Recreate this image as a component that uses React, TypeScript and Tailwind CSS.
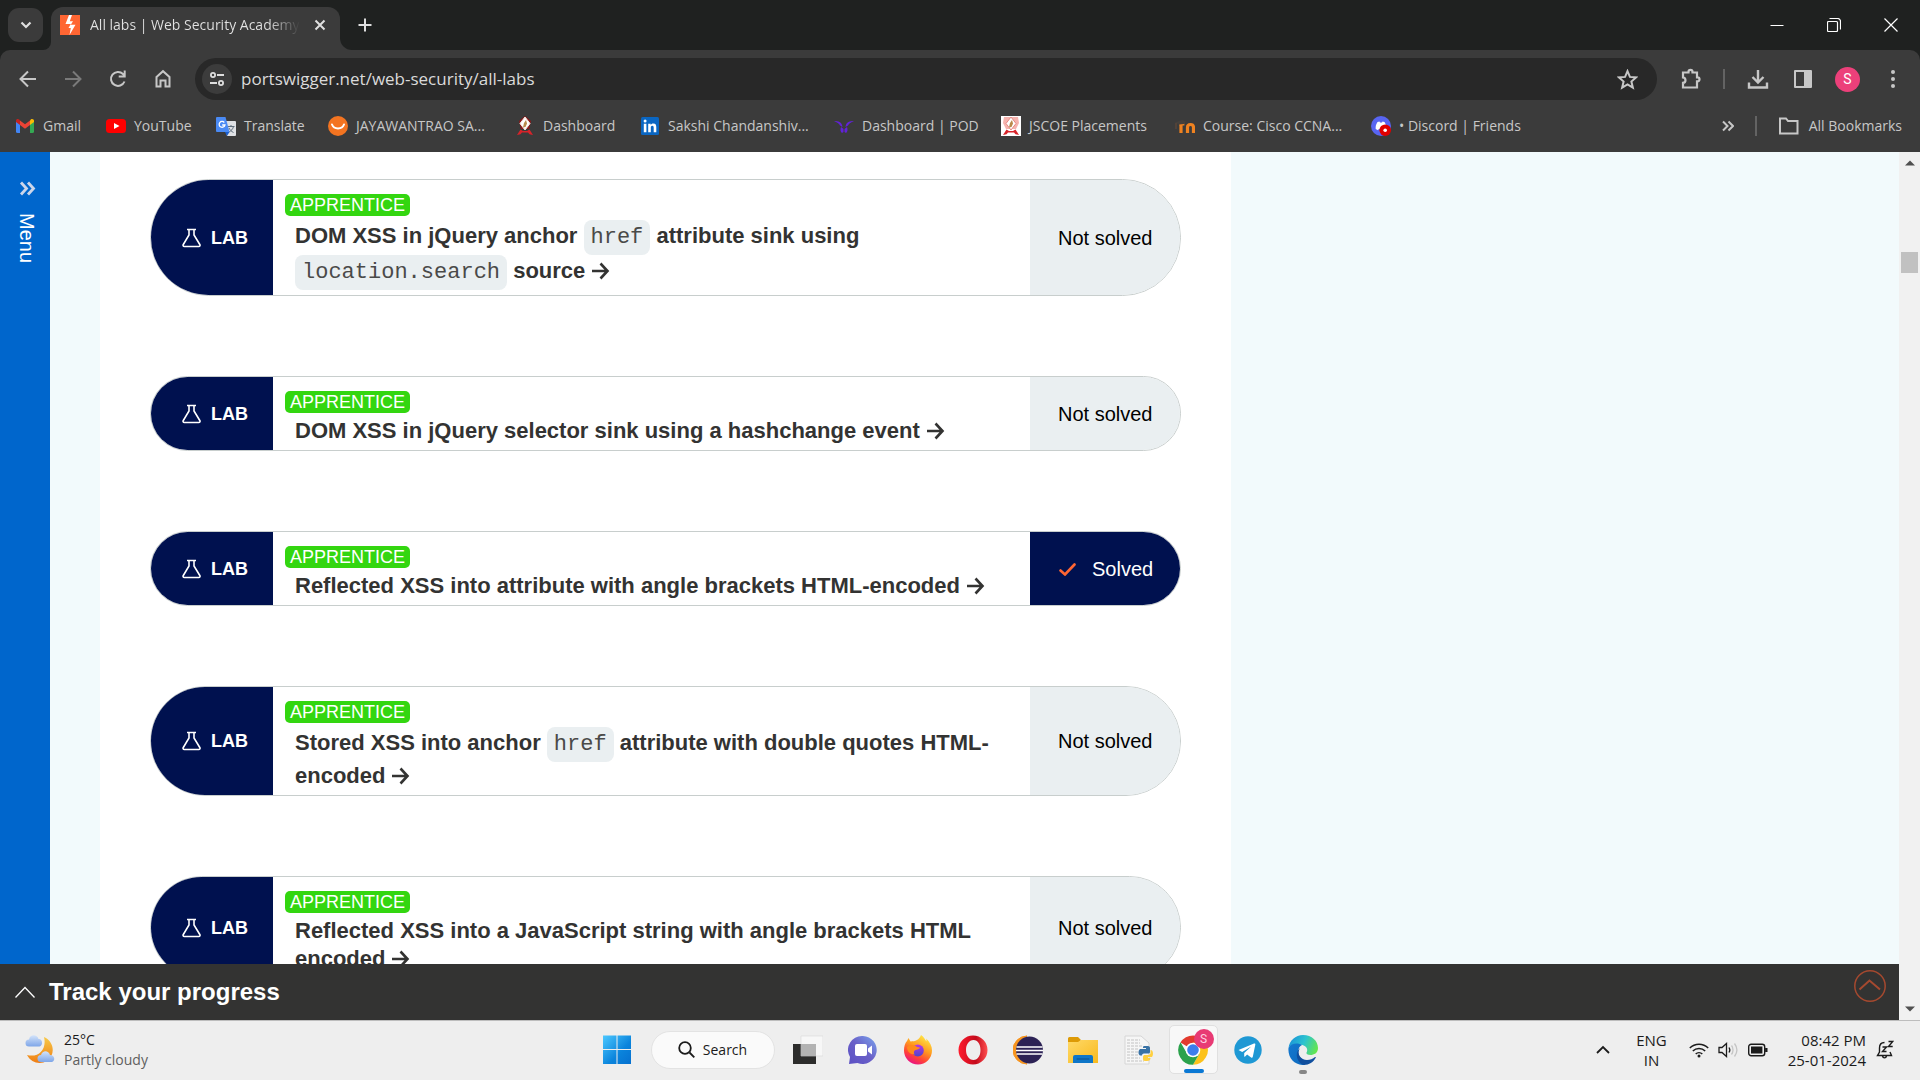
import React from "react";

type P = { children?: React.ReactNode };

const ui = "font-['Open_Sans','Noto_Sans',sans-serif]";

/* ---------- small drawings ---------- */

function Stroke({ d, size = 20, w = 2, vb = "0 0 20 20", cls = "" }: { d: string; size?: number; w?: number; vb?: string; cls?: string }) {
  return (
    <svg width={size} height={size} viewBox={vb} fill="none" stroke="currentColor" strokeWidth={w} className={"shrink-0 " + cls} aria-hidden="true">
      <path d={d} />
    </svg>
  );
}

function BurpIcon() {
  return (
    <svg width="20" height="20" viewBox="0 0 20 20" className="shrink-0" aria-hidden="true">
      <rect width="20" height="20" fill="#ff6633" />
      <path d="M9 0 5.500 9h5.300L8.500 13h2.300L9.500 20l6-10.200h-4.700L13 6.200H9.800L12 0Z" fill="#fff" />
    </svg>
  );
}

function GmailIcon() {
  return (
    <svg width="20" height="20" viewBox="0 0 20 20" className="shrink-0" aria-hidden="true">
      <path d="M1 5v10.500A1.500 1.500 0 0 0 2.500 17H5V8Z" fill="#4285f4" />
      <path d="M15 8v9h2.500a1.500 1.500 0 0 0 1.500-1.500V5Z" fill="#34a853" />
      <path d="M15 4.500V9l4-3V4.800c0-1.700-1.900-2.500-3.200-1.400Z" fill="#fbbc04" />
      <path d="M5 9V4.500l5 3.800 5-3.800V9l-5 3.800Z" fill="#ea4335" />
      <path d="M1 4.800V6l4 3V4.500l-.8-.9C2.900 2.500 1 3.200 1 4.800Z" fill="#c5221f" />
    </svg>
  );
}

function YoutubeIcon() {
  return (
    <svg width="20" height="20" viewBox="0 0 20 20" className="shrink-0" aria-hidden="true">
      <rect y="3" width="20" height="14" rx="3.500" fill="#f00" />
      <path d="m8 7 5.500 3L8 13Z" fill="#fff" />
    </svg>
  );
}

function TranslateIcon() {
  return (
    <svg width="20" height="20" viewBox="0 0 20 20" className="shrink-0" aria-hidden="true">
      <path d="M8 5h11a1 1 0 0 1 1 1v13a1 1 0 0 1-1 1h-8Z" fill="#dfe1e5" />
      <path d="M11.500 10.500h7M15 9v1.500M17.500 10.500c-.5 2.500-2.500 4.500-4.500 5.500M13 12c1 2 2.500 3.500 4.500 4.500" stroke="#5f6e7c" fill="none" />
      <path d="M1 1h8.500l4 15H1a1 1 0 0 1-1-1V2a1 1 0 0 1 1-1Z" fill="#4a8af4" />
      <path d="m9 16 2 4 2.500-4Z" fill="#1a5fd0" />
      <path d="M8.300 6.500A2.900 2.900 0 1 0 8.900 9H6.200" stroke="#fff" strokeWidth="1.300" fill="none" />
    </svg>
  );
}

function SmileIcon() {
  return (
    <svg width="20" height="20" viewBox="0 0 20 20" className="shrink-0" aria-hidden="true">
      <circle cx="10" cy="10" r="10" fill="#f37421" />
      <path d="M4 8.500c2 5.200 10 5.200 12 0" stroke="#fff" strokeWidth="2" fill="none" strokeLinecap="round" />
    </svg>
  );
}

function CrestIcon({ boxed }: { boxed?: boolean }) {
  return (
    <svg width="20" height="20" viewBox="0 0 20 20" className="shrink-0" aria-hidden="true">
      {boxed && <rect width="20" height="20" fill="#fff" />}
      {boxed && <path d="M3 1h14l1 6-3 6H5L2 7Z" fill="#f6b3ae" />}
      {!boxed && <path d="M10 0 16 5l-2 8H6L4 5Z" fill="#8c1717" />}
      <path d="M10 1 15 7.500 10 14 5 7.500Z" fill="#fff" stroke={boxed ? "#e58a84" : "#f3e6e0"} />
      <path d="M11 4 12 7.500 10.500 11 8 11.500 9 7Z" fill="#b98a4b" />
      <path d="M2 19 5.500 13.500 8 15h4l2.500-1.500L18 19l-3.500-.8-1.500-1.700H7l-1.500 1.700Z" fill="#d8232a" />
    </svg>
  );
}

function LinkedinIcon() {
  return (
    <svg width="20" height="20" viewBox="0 0 20 20" className="shrink-0" aria-hidden="true">
      <rect x="1" y="1" width="18" height="18" rx="1.500" fill="#0a66c2" />
      <path d="M3.800 7.800h2.600v8.400H3.800ZM5.100 3.600a1.500 1.500 0 1 1 0 3 1.500 1.500 0 0 1 0-3ZM8.200 7.800h2.500V9c.4-.7 1.300-1.400 2.600-1.400 2.500 0 3 1.600 3 3.800v4.800h-2.600V12c0-1.100-.1-2.200-1.400-2.200s-1.500 1-1.500 2.100v4.300H8.200Z" fill="#fff" />
    </svg>
  );
}

function PodIcon() {
  return (
    <svg width="20" height="20" viewBox="0 0 20 20" className="shrink-0" aria-hidden="true">
      <path d="M0 5c4 0 8 .5 8.500 6L6 9.500C5 7 3 6.500 0 5ZM20 5c-4 0-8 .5-8.500 6L14 9.500c1-2.500 3-3 6-4.500ZM7 11l2.500 2v3L8 17c-1.500-1-2-3-1-6ZM13 11l-2.500 2v3l1.500 1c1.500-1 2-3 1-6Z" fill="#6222d8" />
    </svg>
  );
}

function MoodleIcon() {
  return (
    <svg width="20" height="20" viewBox="0 0 20 20" className="shrink-0" aria-hidden="true">
      <path d="M6 17V8.500M12.500 17v-5.500c0-4 6-4 6 0V17" stroke="#ef8220" strokeWidth="3.200" fill="none" />
      <path d="M4.400 9.500h5v-2H4.400Z" fill="#ef8220" />
      <path d="M0 6.500 7 4l4 1.500L9 8 4 8.500Z" fill="#45403c" />
      <path d="M1 7v6" stroke="#6b4a36" />
    </svg>
  );
}

function DiscordIcon() {
  return (
    <svg width="20" height="20" viewBox="0 0 20 20" className="shrink-0" aria-hidden="true">
      <circle cx="10" cy="10" r="10" fill="#5865f2" />
      <path d="M6.500 6 8.500 5.400l.5 1h2l.5-1 2 .6c1.500 2.200 2 4.400 1.800 7l-2.300 1.200-.8-1.200H7.800L7 14.200 4.700 13C4.500 10.400 5 8.200 6.500 6Z" fill="#fff" />
      <circle cx="14.200" cy="14.200" r="5.800" fill="#e00000" />
      <circle cx="14.200" cy="14.200" r="1.800" fill="#fff" />
    </svg>
  );
}

function Flask() {
  return (
    <svg width="20" height="20" viewBox="0 0 20 20" fill="none" stroke="#fff" strokeWidth="1.600" className="shrink-0" aria-hidden="true">
      <path d="M5 1.500h9M7 1.500v5.500L1.300 16.500c-.6 1 0 2 1 2h14.500c1 0 1.600-1 1-2L12 7V1.500" />
    </svg>
  );
}

function Arrow() {
  return (
    <svg width="18" height="20" viewBox="0 0 18 20" fill="none" stroke="#333332" strokeWidth="2.600" className="ml-[7px] inline-block align-[-3px]" aria-hidden="true">
      <path d="M0 10h15.500M8.500 2.500 15.500 10l-7 7.500" />
    </svg>
  );
}

/* ---------- browser chrome ---------- */

function TabStrip() {
  return (
    <header className="flex h-[50px] shrink-0 items-end bg-[#1f2120] text-[#dfdfdf]">
      <button aria-label="Search tabs" className="mb-2 ml-2 flex h-[34px] w-[35px] items-center justify-center rounded-[11px] bg-[#3b3b3b]">
        <Stroke size={12} vb="0 0 12 12" d="m1.500 3.500 4.500 4.500 4.500-4.500" w={2.200} />
      </button>
      <div className="flex items-end">
        <div className="h-[10px] w-[8px] overflow-hidden bg-[#3b3b3b]">
          <div className="h-full w-full rounded-br-[10px] bg-[#1f2120]" />
        </div>
        <div className="flex h-[43px] w-[289px] items-center rounded-t-[12px] bg-[#3b3b3b] pb-[7px] pl-[9px] pr-[10px]">
          <BurpIcon />
          <span className="ml-[10px] w-[210px] overflow-hidden whitespace-nowrap bg-linear-to-r from-[#e3e3e3] from-85% to-[#3b3b3b] bg-clip-text text-sm leading-5 text-transparent">All labs | Web Security Academy</span>
          <button aria-label="Close tab" className="ml-auto flex h-5 w-5 items-center justify-center">
            <Stroke size={12} vb="0 0 12 12" d="m1.500 1.500 9 9m0-9-9 9" />
          </button>
        </div>
        <div className="h-[12px] w-[12px] overflow-hidden bg-[#3b3b3b]">
          <div className="h-full w-full rounded-bl-[12px] bg-[#1f2120]" />
        </div>
      </div>
      <button aria-label="New tab" className="mb-[15px] ml-[3px] flex h-5 w-5 items-center justify-center">
        <Stroke size={14} vb="0 0 14 14" d="M7 .5v13M.5 7h13" />
      </button>
      <div className="ml-auto flex h-full items-center text-white">
        <button aria-label="Minimise" className="flex h-full w-[58px] items-center justify-center">
          <Stroke size={14} vb="0 0 14 14" d="M.5 7.500h13" w={1} />
        </button>
        <button aria-label="Restore" className="flex h-full w-[56px] items-center justify-center">
          <Stroke size={14} vb="0 0 14 14" d="M2.500.5h8a3 3 0 0 1 3 3v8M1.500 3.500h8a1 1 0 0 1 1 1v8a1 1 0 0 1-1 1h-8a1 1 0 0 1-1-1v-8a1 1 0 0 1 1-1Z" w={1.200} />
        </button>
        <button aria-label="Close" className="flex h-full w-[58px] items-center justify-center">
          <Stroke size={14} vb="0 0 14 14" d="m.5.5 13 13m0-13-13 13" w={1.200} />
        </button>
      </div>
    </header>
  );
}

function ToolButton({ label, children, cls = "" }: P & { label: string; cls?: string }) {
  return (
    <button aria-label={label} className={"flex h-[42px] w-[45px] shrink-0 items-center justify-center " + cls}>
      {children}
    </button>
  );
}

function Toolbar() {
  return (
    <div className="bg-[#1f2120]">
      <div className="flex h-[58px] items-center rounded-t-[10px] bg-[#3b3b3b] pl-[5px] pr-[5px] text-[#c7c7c7]">
        <ToolButton label="Back"><Stroke d="M18 10H3M10 2.500 2.500 10l7.500 7.500" /></ToolButton>
        <ToolButton label="Forward" cls="text-[#7a7a7a]"><Stroke d="M2 10h15M10 2.500l7.500 7.500-7.500 7.500" /></ToolButton>
        <ToolButton label="Reload"><Stroke d="M16.500 12.500A7 7 0 1 1 15 5L16.500 6.800M16.700 1.500v6h-6" /></ToolButton>
        <ToolButton label="Home"><Stroke d="M3.500 8 10 2.200 16.500 8v9.500h-4v-6h-5v6h-4Z" /></ToolButton>
        <div className="ml-[10px] flex h-[42px] min-w-0 flex-1 items-center rounded-full bg-[#282828] pl-[7px] pr-[19px]">
          <button aria-label="View site information" className="flex h-[30px] w-[30px] shrink-0 items-center justify-center rounded-full bg-[#3c3c3c] text-[#dedede]">
            <svg width="18" height="18" viewBox="0 0 18 18" fill="none" stroke="currentColor" strokeWidth="1.800" aria-hidden="true">
              <circle cx="5" cy="5" r="2.100" /><path d="M9 5h7M2 13h7" /><circle cx="13" cy="13" r="2.100" />
            </svg>
          </button>
          <input id="address" aria-label="Address" readOnly defaultValue="portswigger.net/web-security/all-labs" className="ml-[9px] h-7 min-w-0 flex-1 bg-transparent text-[17px] leading-7 text-[#dadada] outline-none" />
          <button aria-label="Bookmark this tab" className="shrink-0">
            <Stroke d="m10 2 2.300 5.500 5.900.5-4.500 3.900 1.400 5.800L10 14.600l-5.100 3.100 1.400-5.800L1.800 8l5.900-.5Z" w={1.900} size={21} />
          </button>
        </div>
        <ToolButton label="Extensions" cls="ml-[11px]"><Stroke size={22} vb="0 0 22 22" d="M3 4.500h5.500v-.7a2 2 0 0 1 4 0v.7H17V9.300h.5a2 2 0 0 1 0 4H17V19.500H3v-4.700c3.300-.3 3.300-5 0-5.300Z" w={2.200} /></ToolButton>
        <span className="ml-[10px] mr-[10px] h-5 w-[2px] bg-[#636363]" />
        <ToolButton label="Downloads"><Stroke size={22} vb="0 0 22 22" d="M11 2v12M5.500 9l5.500 5.500L16.500 9M2 14.500v5h18v-5" w={2.400} /></ToolButton>
        <ToolButton label="Side panel">
          <svg width="20" height="20" viewBox="0 0 20 20" aria-hidden="true"><path d="M2 2h16v16H2Z" fill="none" stroke="currentColor" strokeWidth="2" strokeLinejoin="round" /><path d="M11 2h7v16h-7Z" fill="currentColor" /></svg>
        </ToolButton>
        <ToolButton label="Profile">
          <span className="flex h-[25px] w-[25px] items-center justify-center rounded-full bg-[#ec407a] font-['Roboto',sans-serif] text-sm text-white">S</span>
        </ToolButton>
        <ToolButton label="Browser menu">
          <svg width="20" height="20" viewBox="0 0 20 20" fill="currentColor" aria-hidden="true"><circle cx="10" cy="3" r="2" /><circle cx="10" cy="10" r="2" /><circle cx="10" cy="17" r="2" /></svg>
        </ToolButton>
      </div>
    </div>
  );
}

function Mark({ icon, text, w }: { icon: React.ReactNode; text: string; w: string }) {
  return (
    <a href="#" className={"flex shrink-0 items-center gap-2 whitespace-nowrap " + w}>
      {icon}
      <span>{text}</span>
    </a>
  );
}

function Bookmarks() {
  return (
    <nav className="flex h-[43px] shrink-0 items-center bg-[#3b3b3b] pb-2 pl-[15px] pr-[18px] text-sm leading-5 text-[#c7c7c7]">
      <Mark icon={<GmailIcon />} text="Gmail" w="w-[91px]" />
      <Mark icon={<YoutubeIcon />} text="YouTube" w="w-[110px]" />
      <Mark icon={<TranslateIcon />} text="Translate" w="w-[112px]" />
      <Mark icon={<SmileIcon />} text="JAYAWANTRAO SA..." w="w-[187px]" />
      <Mark icon={<CrestIcon />} text="Dashboard" w="w-[125px]" />
      <Mark icon={<LinkedinIcon />} text="Sakshi Chandanshiv..." w="w-[194px]" />
      <Mark icon={<PodIcon />} text="Dashboard | POD" w="w-[167px]" />
      <Mark icon={<CrestIcon boxed />} text="JSCOE Placements" w="w-[174px]" />
      <Mark icon={<MoodleIcon />} text="Course: Cisco CCNA..." w="w-[196px]" />
      <Mark icon={<DiscordIcon />} text="• Discord | Friends" w="w-[180px]" />
      <button aria-label="More bookmarks" className="ml-auto"><Stroke size={12} vb="0 0 12 12" d="m1 1.500 4.500 4.500L1 10.500m5.500-9L11 6l-4.500 4.500" /></button>
      <span className="mx-[21px] h-5 w-[2px] bg-[#636363]" />
      <button className="flex items-center gap-[9px]">
        <Stroke size={22} vb="0 0 22 22" d="M2 3.500h6l2 2.500h9.500V18.500H2Z" />
        All Bookmarks
      </button>
    </nav>
  );
}

/* ---------- page ---------- */

function Code({ children }: P) {
  return (
    <code className="inline-block h-[35px] rounded-[8px] bg-[#eaeff1] px-[7px] align-middle font-['Liberation_Mono',monospace] text-[22px] font-normal leading-[35px] text-[#4a4a49]">{children}</code>
  );
}

function Lab({ children, solved }: P & { solved?: boolean }) {
  return (
    <article className="flex overflow-hidden rounded-[59px] border border-[#c8cecd] bg-white">
      <div className="flex w-[122px] shrink-0 items-center gap-[9px] bg-[#00114f] pl-[31px] text-lg font-bold text-white">
        <Flask />
        LAB
      </div>
      <div className="min-w-0 flex-1 pb-[5px] pl-3 pt-[14px]">
        <span className="flex h-[22px] w-fit items-center rounded-[5px] bg-[#33d610] px-[5px] text-lg leading-[22px] text-white">APPRENTICE</span>
        <h2 className="ml-[10px] mt-1 text-[22px] font-bold leading-7 text-[#333332]">
          <a href="#">{children}<Arrow /></a>
        </h2>
      </div>
      {solved ? (
        <div className="flex w-[150px] shrink-0 items-center gap-4 bg-[#00114f] pl-[29px] text-xl text-white">
          <svg width="17" height="14" viewBox="0 0 17 14" fill="none" stroke="#ff6633" strokeWidth="2.600" aria-hidden="true"><path d="m1.500 8.500 4.500 4L15.500 2.500" strokeLinecap="round" /></svg>
          Solved
        </div>
      ) : (
        <div className="flex w-[150px] shrink-0 items-center bg-[#eaeff1] pl-7 text-xl text-black">Not solved</div>
      )}
    </article>
  );
}

function Page() {
  return (
    <div className="flex min-h-0 flex-1 border-t border-[#3b3b3b] bg-[#f2fafc] font-['Liberation_Sans',Arial,sans-serif]">
      <div className="flex min-w-0 flex-1 flex-col">
        <div className="flex min-h-0 flex-1">
          <button className="flex w-[50px] shrink-0 flex-col items-center gap-4 bg-[#0066cc] pl-1 pt-7 text-white">
            <Stroke size={17} vb="0 0 17 15" d="m2 1.500 5.500 6L2 13.500m7-12 5.500 6-5.500 6" w={2.800} cls="text-[#ccd6ea]" />
            <span className="text-xl leading-6 [writing-mode:vertical-rl]">Menu</span>
          </button>
          <main className="ml-[50px] flex w-[1131px] flex-col gap-20 overflow-hidden bg-white px-[50px] pt-[27px] [&>*]:shrink-0">
            <Lab>DOM XSS in jQuery anchor <Code>href</Code> attribute sink using <Code>location.search</Code> source</Lab>
            <Lab>DOM XSS in jQuery selector sink using a hashchange event</Lab>
            <Lab solved>Reflected XSS into attribute with angle brackets HTML-encoded</Lab>
            <Lab>Stored XSS into anchor <Code>href</Code> attribute with double quotes HTML-encoded</Lab>
            <Lab>Reflected XSS into a JavaScript string with angle brackets HTML encoded</Lab>
          </main>
        </div>
        <footer className="flex h-14 shrink-0 items-center bg-[#333332] pl-[15px] pr-[13px] text-white">
          <button className="flex items-center gap-[14px] text-2xl font-bold">
            <Stroke size={20} vb="0 0 20 20" d="m.5 15.500 9.500-10 9.500 10" w={1.300} />
            Track your progress
          </button>
          <button aria-label="Back to top" className="mb-3 ml-auto text-[#a5492f]">
            <svg width="32" height="32" viewBox="0 0 32 32" fill="none" stroke="currentColor" strokeWidth="1.500" aria-hidden="true"><circle cx="16" cy="16" r="15.200" /><path d="m5.500 19.500 10-9 10.500 9" strokeWidth="2" /></svg>
          </button>
        </footer>
      </div>
      <div className="flex w-[21px] shrink-0 flex-col items-center bg-[#f1f1f1] py-[6px] text-[#505050]">
        <svg width="10" height="10" viewBox="0 0 10 10" fill="currentColor" aria-hidden="true"><path d="m0 7.500 5-5 5 5Z" /></svg>
        <div className="mt-[84px] h-[21px] w-[17px] bg-[#c1c1c1]" />
        <svg width="10" height="10" viewBox="0 0 10 10" fill="currentColor" className="mt-auto" aria-hidden="true"><path d="m0 2.500 5 5 5-5Z" /></svg>
      </div>
    </div>
  );
}

/* ---------- taskbar ---------- */

function Weather() {
  return (
    <svg width="30" height="30" viewBox="0 0 30 30" className="shrink-0" aria-hidden="true">
      <defs>
        <linearGradient id="moon" x1="0" y1="0" x2="0" y2="1"><stop offset="0" stopColor="#f7c948" /><stop offset="1" stopColor="#ef7d14" /></linearGradient>
        <linearGradient id="cloud" x1="0" y1="0" x2="0" y2="1"><stop offset="0" stopColor="#d3e3fa" /><stop offset="1" stopColor="#7ea6e8" /></linearGradient>
      </defs>
      <path d="M19 2c10 4 12 18 3 24-7 4-16 2-20-6 12 3 20-6 17-18Z" fill="url(#moon)" />
      <path d="M4 11.500a3.500 3.500 0 0 1 0-7C5-1 12-1 13.500 4c4-.5 5 6 1 7.500Z" fill="url(#cloud)" />
      <path d="M16 27a3.500 3.500 0 0 1 0-7c1.500-5 7.500-5 9 0 5 0 5.500 6 2 7Z" fill="url(#cloud)" />
    </svg>
  );
}

function WindowsIcon() {
  return (
    <svg width="30" height="30" viewBox="0 0 30 30" aria-hidden="true">
      <defs><linearGradient id="win" x1="0" y1="0" x2="1" y2="1"><stop offset="0" stopColor="#4cc8ff" /><stop offset=".6" stopColor="#0a84dc" /><stop offset="1" stopColor="#0670cf" /></linearGradient></defs>
      <path d="M1 .5h13.500V14H1ZM15.500.5H29V14H15.500ZM1 15h13.500v14H1ZM15.500 15H29v14H15.500Z" fill="url(#win)" />
    </svg>
  );
}

function TaskViewIcon() {
  return (
    <svg width="30" height="30" viewBox="0 0 30 30" aria-hidden="true">
      <path d="M0 9h23v20H0Z" fill="#2c2c2b" />
      <path d="M8 1h22v20H8Z" fill="#f7f7f7" stroke="#d9d9d9" strokeWidth=".6" />
      <path d="M8 9h15v12H8Z" fill="#b3b3b3" />
    </svg>
  );
}

function ChatIcon() {
  return (
    <svg width="30" height="30" viewBox="0 0 30 30" aria-hidden="true">
      <defs><linearGradient id="chat" x1="0" y1="1" x2="1" y2="0"><stop offset="0" stopColor="#5b50c4" /><stop offset=".5" stopColor="#6a60c8" /><stop offset="1" stopColor="#7ba6ee" /></linearGradient></defs>
      <path d="M15 1a14 14 0 1 1-5.500 27L1 29l1-7A14 14 0 0 1 15 1Z" fill="url(#chat)" />
      <rect x="7" y="9" width="12" height="12" rx="2" fill="#fff" /><path d="m20 13.500 4-3v9l-4-3Z" fill="#fff" />
    </svg>
  );
}

function FirefoxIcon() {
  return (
    <svg width="30" height="30" viewBox="0 0 30 30" aria-hidden="true">
      <defs>
        <linearGradient id="ff" x1=".8" y1="0" x2=".3" y2="1"><stop offset="0" stopColor="#fff04a" /><stop offset=".45" stopColor="#ff9a1f" /><stop offset=".75" stopColor="#ff4038" /><stop offset="1" stopColor="#e8108a" /></linearGradient>
        <linearGradient id="ff2" x1=".5" y1="0" x2=".5" y2="1"><stop offset="0" stopColor="#b936e8" /><stop offset="1" stopColor="#4c46c8" /></linearGradient>
      </defs>
      <path d="M18 0c3 2 4 4.500 5.500 6.500 0-1.200 0-2-.4-3C27 7 29 11 29 15.500a14 14 0 0 1-28 0C1 11.500 2 8 4 6l1.500-3 2 3.500C10 6 12 6.500 14 5c1.800-1 3-2.500 4-5Z" fill="url(#ff)" />
      <circle cx="14.800" cy="15.500" r="6" fill="url(#ff2)" />
      <path d="M4 12c3-3 8-2.500 10 0 1.500.3 2.500.3 3 .8-1 1.700-3 1.700-4.500 2.200-2 .8-2 3-.8 4.500C7 19.500 4 16 4 12Z" fill="#ff8a1c" />
    </svg>
  );
}

function OperaIcon() {
  return (
    <svg width="30" height="30" viewBox="0 0 30 30" aria-hidden="true">
      <defs><linearGradient id="op" x1="0" y1="0" x2="1" y2="0"><stop offset="0" stopColor="#ff1b2d" /><stop offset=".6" stopColor="#c40a1c" /><stop offset="1" stopColor="#ff5050" /></linearGradient></defs>
      <path fillRule="evenodd" d="M15 .5a14.500 14.500 0 1 1 0 29 14.500 14.500 0 0 1 0-29ZM15.500 5C11 5 8 9.500 8 15s3 10 7.500 10 7-4.500 7-10-2.500-10-7-10Z" fill="url(#op)" />
    </svg>
  );
}

function EclipseIcon() {
  return (
    <svg width="30" height="30" viewBox="0 0 30 30" aria-hidden="true">
      <path d="M14 1A14 14 0 0 0 14 29C2 25 2 5 14 1Z" fill="#f7941e" stroke="#f7941e" />
      <ellipse cx="16.500" cy="15" rx="13.500" ry="13.500" fill="#2c2255" />
      <path d="M3.500 12h26M3 15.500h27M3.500 19h26" stroke="#fff" strokeWidth="1.700" />
    </svg>
  );
}

function FolderIcon() {
  return (
    <svg width="30" height="30" viewBox="0 0 30 30" aria-hidden="true">
      <defs><linearGradient id="fo" x1="0" y1="0" x2="1" y2="1"><stop offset="0" stopColor="#ffd968" /><stop offset="1" stopColor="#f8b91c" /></linearGradient></defs>
      <path d="M0 3.500A1.500 1.500 0 0 1 1.500 2H10l3 3-3 4H0Z" fill="#dd9a06" />
      <path d="M0 7h10l3-2h17v23H0Z" fill="url(#fo)" />
      <path d="M5 28v-6a2 2 0 0 1 2-2h16a2 2 0 0 1 2 2v6Z" fill="#0f76c8" /><path d="M9 24h12" stroke="#0b4f8c" strokeLinecap="round" />
    </svg>
  );
}

function PythonFileIcon() {
  return (
    <svg width="30" height="30" viewBox="0 0 30 30" aria-hidden="true">
      <path d="M2 1h16l8 7v21H2Z" fill="#f6f6f6" stroke="#d6d6d6" />
      <path d="M4 5h13M4 8h13M4 11h16M4 14h12M4 17h11M4 20h11M4 23h13M4 26h17" stroke="#c2c2c2" strokeDasharray="3 1" />
      <path d="M21 11h4c1.500 0 2 1 2 2v4c0 1-1 1.500-2 1.500h-4c-1.500 0-2 1-2 2h-2c-2-1-2-5 0-6.500h6v-1h-3c0-1 0-2 1-2Z" fill="#3a73a6" />
      <path d="M24 26h-2c-1.500 0-2-1-2-2v-2c0-1.500 1-2 2-2h3c1.500 0 2.500-.8 2.500-2v-3c3 0 3 5 1.500 7h-4v1h2.500c0 2-1 3-3.500 3Z" fill="#ffd040" />
    </svg>
  );
}

function ChromeIcon() {
  return (
    <svg width="30" height="30" viewBox="0 0 30 30" aria-hidden="true">
      <path d="M15 15 2.500 7.500A14.800 14.800 0 0 1 27.800 7.500Z" fill="#e33b2e" />
      <path d="M15 15V7.500h12.800A14.800 14.800 0 0 1 15 29.800L21.500 18.500Z" fill="#fcc21b" />
      <path d="M15 15l6.500 3.500L15 29.800A14.800 14.800 0 0 1 2.500 7.200L9 18.500Z" fill="#2ba24c" />
      <circle cx="15" cy="15" r="7.300" fill="#fff" /><circle cx="15" cy="15" r="5.800" fill="#3c7ded" />
    </svg>
  );
}

function TelegramIcon() {
  return (
    <svg width="30" height="30" viewBox="0 0 30 30" aria-hidden="true">
      <circle cx="15" cy="15" r="13.700" fill="#1e98d4" />
      <path d="m5.500 15 15.500-6.500c1-.3 1.500.2 1.300 1.200l-2.500 12c-.2 1-.9 1.200-1.700.7l-4-3-2 2c-.5.4-.9.300-.9-.5v-3l7-6.500-9 5.500Z" fill="#fff" />
    </svg>
  );
}

function EdgeIcon() {
  return (
    <svg width="30" height="30" viewBox="0 0 30 30" aria-hidden="true">
      <defs>
        <linearGradient id="ed1" x1="0" y1=".3" x2="1" y2=".6"><stop offset="0" stopColor="#1b93d8" /><stop offset=".5" stopColor="#2cc3cf" /><stop offset="1" stopColor="#64e64e" /></linearGradient>
        <linearGradient id="ed2" x1="0" y1="0" x2="1" y2="1"><stop offset="0" stopColor="#1478cf" /><stop offset="1" stopColor="#0d69bd" /></linearGradient>
      </defs>
      <path d="M.5 13C1.500 5.500 7.500 0 15 0c9 0 15 6 15 13 0 5-4 7-7.500 7-3 0-4.500-1-4-2.500 1.500-2 1-6-4-7.500C9 8.500 3 9 .5 13Z" fill="url(#ed1)" />
      <path d="M.5 13C3 8 10 7.500 14 10c-5 2-6 12 3 16.500 1 .7 1 2.500-1 3.500C7 30.500-.5 23 .5 13Z" fill="url(#ed2)" />
      <path d="M12 13c-4 6 1 12 7 12 3 0 6-1 8-3 .7-.3 1 .3.700.8C25.500 27 21 30 16 30 9 28 6 18 12 13Z" fill="#104f9e" />
    </svg>
  );
}

function TaskButton({ label, children }: P & { label: string }) {
  return <button aria-label={label} className="flex h-[49px] w-[55px] shrink-0 items-center justify-center">{children}</button>;
}

function Taskbar() {
  return (
    <footer className="grid h-[60px] shrink-0 grid-cols-[1fr_auto_1fr] items-center border-t border-[#bdbdbd] bg-[#eeeeee] pb-[2px] text-[#1b1b1b]">
      <button className="flex w-fit items-center gap-[9px] pl-[25px] text-left text-sm leading-5">
        <Weather />
        <span><span className="block">25°C</span><span className="block text-[#5f5f5f]">Partly cloudy</span></span>
      </button>
      <div className="flex items-center">
        <TaskButton label="Start"><WindowsIcon /></TaskButton>
        <button className="mx-[6px] flex h-[38px] w-[124px] items-center justify-center gap-2 rounded-full border border-[#e3e3e3] bg-[#fafafa] text-sm">
          <svg width="17" height="17" viewBox="0 0 17 17" fill="none" stroke="currentColor" strokeWidth="1.800" aria-hidden="true"><circle cx="7" cy="7" r="5.800" /><path d="m11.500 11.500 4.800 4.800" /></svg>
          Search
        </button>
        <TaskButton label="Task view"><TaskViewIcon /></TaskButton>
        <TaskButton label="Chat"><ChatIcon /></TaskButton>
        <TaskButton label="Firefox"><FirefoxIcon /></TaskButton>
        <TaskButton label="Opera"><OperaIcon /></TaskButton>
        <TaskButton label="Eclipse"><EclipseIcon /></TaskButton>
        <TaskButton label="File Explorer"><FolderIcon /></TaskButton>
        <TaskButton label="Python file"><PythonFileIcon /></TaskButton>
        <button aria-label="Chrome" className="relative mx-[3px] flex h-[49px] w-[49px] shrink-0 items-center justify-center rounded-[5px] border border-[#e0e0e0] bg-[#f8f8f8]">
          <ChromeIcon />
          <span className="absolute right-[3px] top-[3px] flex h-5 w-5 items-center justify-center rounded-full bg-[#e83a74] font-['Roboto',sans-serif] text-xs text-[#ffd0e0]">S</span>
          <span className="absolute bottom-0 left-[14px] h-1 w-5 rounded-full bg-[#0a78d4]" />
        </button>
        <TaskButton label="Telegram"><TelegramIcon /></TaskButton>
        <button aria-label="Edge" className="relative flex h-[49px] w-[55px] shrink-0 items-center justify-center">
          <EdgeIcon />
          <span className="absolute bottom-0 left-[23px] h-1 w-2 rounded-full bg-[#868686]" />
        </button>
      </div>
      <div className="flex items-center justify-end pr-[26px] text-[15px] leading-5">
        <button aria-label="Show hidden icons" className="mr-[26px]"><Stroke size={14} vb="0 0 14 14" d="m1 10 6-6 6 6" w={1.800} /></button>
        <button className="mr-[22px] text-center"><span className="block">ENG</span><span className="block">IN</span></button>
        <button aria-label="Network, sound and battery" className="mr-[20px] flex items-center gap-[9px]">
          <svg width="20" height="16" viewBox="0 0 20 16" fill="none" stroke="currentColor" strokeWidth="1.500" aria-hidden="true"><path d="M.8 6a13 13 0 0 1 18.400 0M3.800 9a8.800 8.800 0 0 1 12.400 0M6.700 12a4.700 4.700 0 0 1 6.600 0" /><circle cx="10" cy="14" r="1.500" fill="currentColor" stroke="none" /></svg>
          <svg width="21" height="16" viewBox="0 0 21 16" fill="none" stroke="currentColor" strokeWidth="1.300" aria-hidden="true"><path d="M1 5.500h3L8.500 1.500v13L4 10.500H1ZM11 5.500c1 1.500 1 3.500 0 5" /><path d="M13.500 3.500c2 2.500 2 6.500 0 9M16.500 1.500c3 4 3 9 0 13" stroke="#c4c4c4" /></svg>
          <svg width="20" height="14" viewBox="0 0 20 14" fill="none" stroke="currentColor" strokeWidth="1.400" aria-hidden="true"><rect x=".7" y="1.200" width="16" height="11.600" rx="2.500" /><rect x="3" y="3.500" width="11.400" height="7" fill="currentColor" stroke="none" /><path d="M18.300 5v4" strokeWidth="2.400" /></svg>
        </button>
        <button className="mr-[10px] text-right"><span className="block">08:42 PM</span><span className="block">25-01-2024</span></button>
        <button aria-label="Notifications">
          <svg width="18" height="20" viewBox="0 0 18 20" fill="none" stroke="currentColor" strokeWidth="1.400" aria-hidden="true"><path d="M8.500 2.500C5 2.500 3.500 5 3.500 8v4L1.500 15.500h14L14 12M6.500 16c.5 2.500 3.500 2.500 4 0M6.500 7h4l-4 4.500h4M12.500 1.500h4.200l-4.200 5h4.200" /></svg>
        </button>
      </div>
    </footer>
  );
}

export default function App() {
  return (
    <div className={"flex h-screen flex-col overflow-hidden " + ui}>
      <TabStrip />
      <Toolbar />
      <Bookmarks />
      <Page />
      <Taskbar />
    </div>
  );
}
